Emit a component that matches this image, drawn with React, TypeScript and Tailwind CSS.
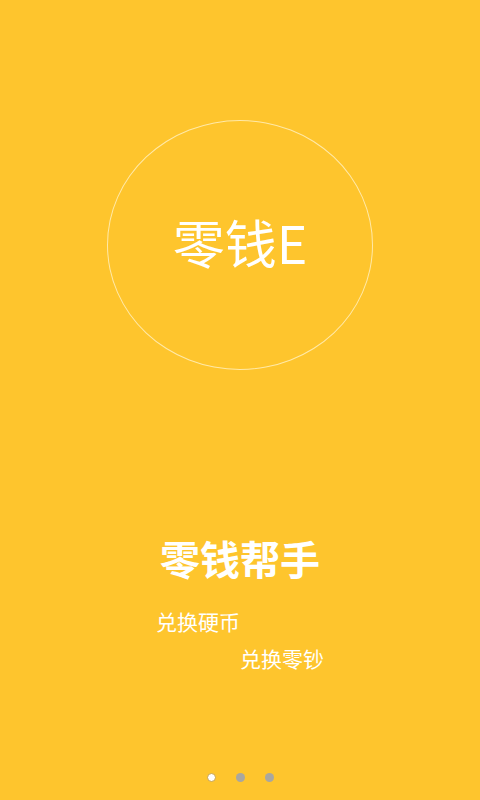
export default function App() {
  return (
    <div
      className="flex h-[800px] w-full flex-col items-center overflow-hidden bg-[#fec52d] text-white"
      style={{ fontFamily: '"Noto Sans CJK SC", "Noto Sans", sans-serif' }}
    >
      <div className="mt-[120px] flex h-[250px] w-[266px] items-center justify-center rounded-[50%] border border-[#ffe9a8]">
        <span className="-mt-[6px] text-[52px] leading-none">零钱E</span>
      </div>

      <h1 className="mt-[168px] text-[40px] font-bold leading-[40px]">零钱帮手</h1>

      <div className="mt-[33px] flex w-[168px] flex-col text-[21px] leading-[20px]">
        <span className="self-start">兑换硬币</span>
        <span className="mt-[17px] self-end">兑换零钞</span>
      </div>

      <div className="mt-auto mb-[18px] flex items-center gap-[20px]">
        <span className="h-[9px] w-[9px] rounded-full border border-[#c9a24a] bg-white" />
        <span className="h-[9px] w-[9px] rounded-full bg-[#a9a7a0]" />
        <span className="h-[9px] w-[9px] rounded-full bg-[#a9a7a0]" />
      </div>
    </div>
  );
}
